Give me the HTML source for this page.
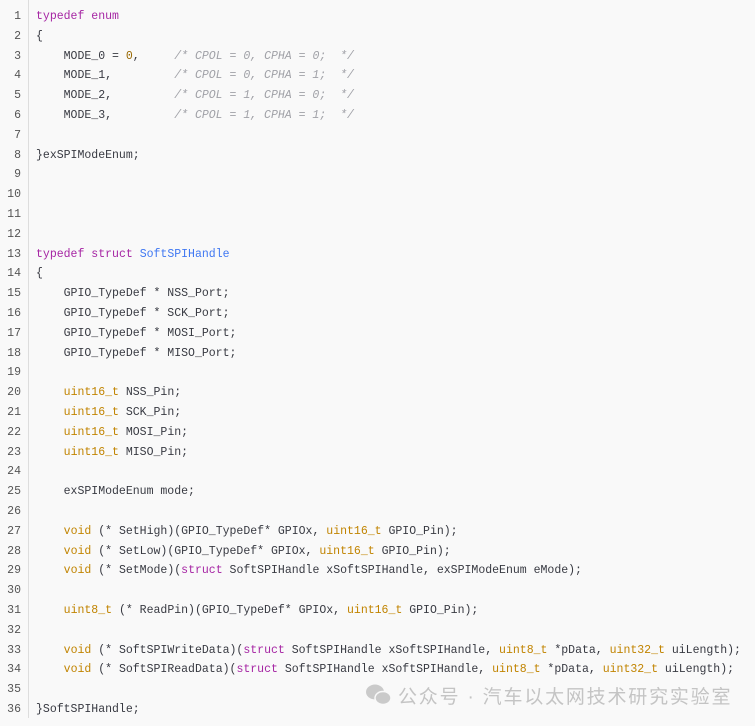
<!DOCTYPE html>
<html><head><meta charset="utf-8"><style>
html,body{margin:0;padding:0;background:#f9f9f9;width:755px;height:726px;overflow:hidden}
.wrap{position:absolute;left:0;top:7px;}
.g{position:absolute;left:0;top:0;width:21px;text-align:right;color:#555;font:11.53px/19.8px "Liberation Mono",monospace;white-space:pre}
.bar{position:absolute;left:28px;top:0;width:1px;height:718px;background:#ddd}
.c{position:absolute;left:36px;top:0;color:#383a42;font:11.53px/19.8px "Liberation Mono",monospace;white-space:pre}
.k{color:#a626a4}.n{color:#986801}.t{color:#c18401}.cm{color:#a0a1a7;font-style:italic}.b{color:#4078f2}
.wm{position:absolute;left:398px;top:682px;color:#c4c4c4;font:19px "Liberation Sans","Noto Sans CJK SC",sans-serif;letter-spacing:1.8px}
</style></head><body>
<div class="bar"></div>
<div class="wrap">
<div class="g">1
2
3
4
5
6
7
8
9
10
11
12
13
14
15
16
17
18
19
20
21
22
23
24
25
26
27
28
29
30
31
32
33
34
35
36</div>
<div class="c"><span class="k">typedef</span> <span class="k">enum</span>
{
    MODE_0 = <span class="n">0</span>,     <span class="cm">/* CPOL = 0, CPHA = 0;  */</span>
    MODE_1,         <span class="cm">/* CPOL = 0, CPHA = 1;  */</span>
    MODE_2,         <span class="cm">/* CPOL = 1, CPHA = 0;  */</span>
    MODE_3,         <span class="cm">/* CPOL = 1, CPHA = 1;  */</span>

}exSPIModeEnum;




<span class="k">typedef</span> <span class="k">struct</span> <span class="b">SoftSPIHandle</span>
{
    GPIO_TypeDef * NSS_Port;
    GPIO_TypeDef * SCK_Port;
    GPIO_TypeDef * MOSI_Port;
    GPIO_TypeDef * MISO_Port;

    <span class="t">uint16_t</span> NSS_Pin;
    <span class="t">uint16_t</span> SCK_Pin;
    <span class="t">uint16_t</span> MOSI_Pin;
    <span class="t">uint16_t</span> MISO_Pin;

    exSPIModeEnum mode;

    <span class="t">void</span> (* SetHigh)(GPIO_TypeDef* GPIOx, <span class="t">uint16_t</span> GPIO_Pin);
    <span class="t">void</span> (* SetLow)(GPIO_TypeDef* GPIOx, <span class="t">uint16_t</span> GPIO_Pin);
    <span class="t">void</span> (* SetMode)(<span class="k">struct</span> SoftSPIHandle xSoftSPIHandle, exSPIModeEnum eMode);

    <span class="t">uint8_t</span> (* ReadPin)(GPIO_TypeDef* GPIOx, <span class="t">uint16_t</span> GPIO_Pin);

    <span class="t">void</span> (* SoftSPIWriteData)(<span class="k">struct</span> SoftSPIHandle xSoftSPIHandle, <span class="t">uint8_t</span> *pData, <span class="t">uint32_t</span> uiLength);
    <span class="t">void</span> (* SoftSPIReadData)(<span class="k">struct</span> SoftSPIHandle xSoftSPIHandle, <span class="t">uint8_t</span> *pData, <span class="t">uint32_t</span> uiLength);

}SoftSPIHandle;</div>
</div>
<svg style="position:absolute;left:365px;top:683px" width="28" height="24" viewBox="0 0 28 24"><ellipse cx="10" cy="9" rx="9" ry="7.5" fill="#cacaca"/><ellipse cx="18" cy="15" rx="8" ry="6.5" fill="#cacaca" stroke="#f9f9f9" stroke-width="1.5"/></svg>
<div class="wm">公众号 · 汽车以太网技术研究实验室</div>
</body></html>
